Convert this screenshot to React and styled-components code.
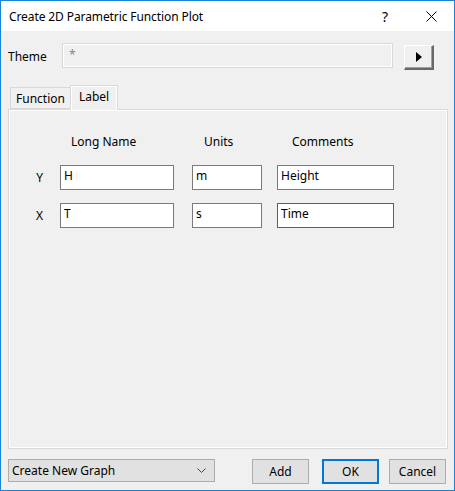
import React from "react";
import styled, { createGlobalStyle } from "styled-components";

const Global = createGlobalStyle`
  html, body { margin: 0; padding: 0; background: #ffffff; }
  body { font-family: "Noto Sans", "Liberation Sans", sans-serif; font-size: 12px; color: #000; }
  * { box-sizing: border-box; }
`;

const Window = styled.div`
  width: 455px;
  height: 491px;
  border: 1px solid #1883d7;
  display: flex;
  flex-direction: column;
  background: #f0f0f0;
`;

const TitleBar = styled.div`
  height: 30px;
  background: #ffffff;
  display: flex;
  align-items: center;
  padding-left: 8px;
  flex-shrink: 0;
`;

const TitleText = styled.div`
  flex: 1;
  font-size: 12px;
  letter-spacing: -0.1px;
`;

const TitleIcon = styled.div`
  width: 46px;
  height: 30px;
  display: flex;
  align-items: center;
  justify-content: center;
  font-size: 14px;
`;

const Body = styled.div`
  flex: 1;
  display: flex;
  flex-direction: column;
  padding: 12px 6px 0 7px;
`;

const ThemeRow = styled.div`
  display: flex;
  align-items: flex-start;
  height: 27px;
`;

const ThemeLabel = styled.div`
  width: 54px;
  line-height: 25px;
  padding-top: 1px;
`;

const ThemeField = styled.div`
  width: 331px;
  height: 25px;
  border: 1px solid #d9d9d9;
  box-shadow: inset 0 0 0 1px #ffffff;
  background: #f0f0f0;
  color: #8a8a8a;
  padding: 2px 6px;
  font-size: 12px;
`;

const ArrowButton = styled.button`
  margin-left: 11px;
  margin-top: 2px;
  width: 30px;
  height: 25px;
  padding: 0;
  background: #f0f0f0;
  border-style: solid;
  border-width: 1px 2px 2px 1px;
  border-color: #ffffff #696969 #696969 #ffffff;
  box-shadow: inset -1px -1px 0 #a0a0a0;
  display: flex;
  align-items: center;
  justify-content: center;
`;

const Tabs = styled.div`
  display: flex;
  align-items: flex-end;
  margin-top: 14px;
  padding-left: 2px;
  height: 25px;
  position: relative;
  z-index: 1;
`;

const Tab = styled.div`
  height: ${(p) => (p.$active ? "25px" : "22px")};
  padding: 0 ${(p) => (p.$active ? "8px" : "5px")};
  margin-bottom: ${(p) => (p.$active ? "-1px" : "0")};
  border: 1px solid #d9d9d9;
  border-bottom: ${(p) => (p.$active ? "none" : "1px solid #d9d9d9")};
  background: #f0f0f0;
  box-shadow: ${(p) => (p.$active ? "inset 1px 1px 0 #ffffff, inset -1px 0 0 #ffffff" : "none")};
  display: flex;
  align-items: ${(p) => (p.$active ? "flex-start" : "center")};
  padding-top: ${(p) => (p.$active ? "2px" : "0")};
  margin-left: ${(p) => (p.$active ? "-1px" : "0")};
`;

const Panel = styled.div`
  height: 340px;
  border: 1px solid #d9d9d9;
  box-shadow: inset 0 0 0 1px #ffffff;
  background: #f0f0f0;
  padding: 24px 0 0 0;
`;

const Grid = styled.div`
  display: grid;
  grid-template-columns: 51px 132px 85px 117px;
  row-gap: 13px;
  align-items: center;
`;

const Header = styled.div`
  padding-left: ${(p) => p.$pad}px;
  height: 16px;
  line-height: 16px;
  margin-bottom: 2px;
`;

const RowLabel = styled.div`
  text-align: right;
  padding-right: 17px;
`;

const Field = styled.div`
  width: ${(p) => p.$w}px;
  height: 25px;
  background: #ffffff;
  border: 1px solid ${(p) => (p.$focus ? "#0078d7" : "#7a7a7a")};
  padding: 1px 3px;
  line-height: 18px;
`;

const Footer = styled.div`
  display: flex;
  align-items: flex-start;
  margin-top: 10px;
`;

const Select = styled.div`
  width: 207px;
  height: 23px;
  background: #e1e1e1;
  border: 1px solid #adadad;
  display: flex;
  align-items: center;
  justify-content: space-between;
  padding: 0 8px 0 3px;
  margin-right: 37px;
`;

const Button = styled.button`
  width: 57px;
  height: 25px;
  margin-right: ${(p) => p.$gap || 0}px;
  background: #e1e1e1;
  border: ${(p) => (p.$default ? "2px solid #0078d7" : "1px solid #adadad")};
  font-family: inherit;
  font-size: 12px;
  color: #000;
  padding: 0;
`;

export default function App() {
  return (
    <>
      <Global />
      <Window>
        <TitleBar>
          <TitleText>Create 2D Parametric Function Plot</TitleText>
          <TitleIcon>?</TitleIcon>
          <TitleIcon>
            <svg width="11" height="11" viewBox="0 0 11 11">
              <path d="M0.5 0.5 L10.5 10.5 M10.5 0.5 L0.5 10.5" stroke="#000" strokeWidth="1" />
            </svg>
          </TitleIcon>
        </TitleBar>
        <Body>
          <ThemeRow>
            <ThemeLabel>Theme</ThemeLabel>
            <ThemeField>*</ThemeField>
            <ArrowButton>
              <svg width="6" height="10" viewBox="0 0 6 10">
                <path d="M0 0 L6 5 L0 10 Z" fill="#000" />
              </svg>
            </ArrowButton>
          </ThemeRow>
          <Tabs>
            <Tab>Function</Tab>
            <Tab $active>Label</Tab>
          </Tabs>
          <Panel>
            <Grid>
              <div />
              <Header $pad={11}>Long Name</Header>
              <Header $pad={12}>Units</Header>
              <Header $pad={15}>Comments</Header>

              <RowLabel>Y</RowLabel>
              <Field $w={114}>H</Field>
              <Field $w={70}>m</Field>
              <Field $w={117}>Height</Field>

              <RowLabel>X</RowLabel>
              <Field $w={114}>T</Field>
              <Field $w={70}>s</Field>
              <Field $w={117} $focus>Time</Field>
            </Grid>
          </Panel>
          <Footer>
            <Select>
              <span>Create New Graph</span>
              <svg width="9" height="5" viewBox="0 0 9 5">
                <path d="M0.5 0.5 L4.5 4.5 L8.5 0.5" stroke="#444" fill="none" strokeWidth="1" />
              </svg>
            </Select>
            <Button $gap={13}>Add</Button>
            <Button $default $gap={10}>OK</Button>
            <Button>Cancel</Button>
          </Footer>
        </Body>
      </Window>
    </>
  );
}
